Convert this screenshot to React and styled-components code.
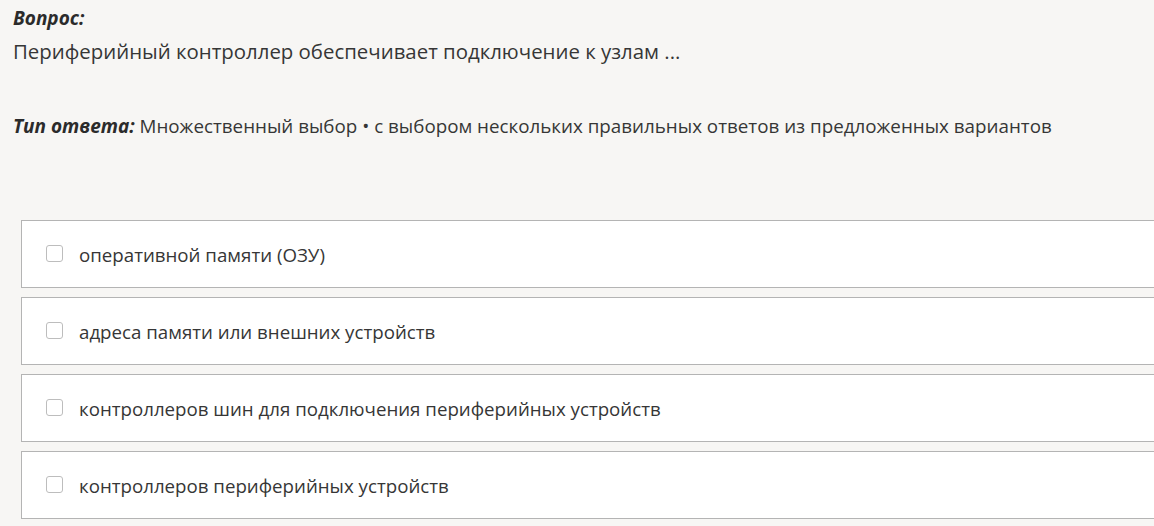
import React from 'react';
import styled, { createGlobalStyle } from 'styled-components';

const options = [
  'оперативной памяти (ОЗУ)',
  'адреса памяти или внешних устройств',
  'контроллеров шин для подключения периферийных устройств',
  'контроллеров периферийных устройств',
];

export default function App() {
  return (
    <>
      <GlobalSC />
      <PageSC>
        <LabelSC $size={19}>Вопрос:</LabelSC>
        <QuestionSC>
          Периферийный контроллер обеспечивает подключение к узлам ...
        </QuestionSC>
        <TypeSC>
          <LabelSC as="span" $size={19}>Тип ответа:</LabelSC> Множественный выбор • с
          выбором нескольких правильных ответов из предложенных вариантов
        </TypeSC>
        <OptionListSC>
          {options.map((text) => (
            <OptionSC key={text}>
              <CheckboxSC />
              <span>{text}</span>
            </OptionSC>
          ))}
        </OptionListSC>
      </PageSC>
    </>
  );
}

const GlobalSC = createGlobalStyle`
  html, body {
    margin: 0;
    padding: 0;
    background: #f7f6f4;
    overflow: hidden;
  }
`;

const PageSC = styled('div')`
  font-family: 'Open Sans', 'Noto Sans', sans-serif;
  color: #363636;
  padding: 5px 0 0 13px;
`;

const LabelSC = styled('div')`
  font-weight: 700;
  font-style: italic;
  font-size: ${(p) => p.$size || 16}px;
  color: #2b2b2b;
  line-height: 26px;
`;

const QuestionSC = styled('div')`
  font-size: 20.4px;
  line-height: 30px;
  margin-top: 5px;
`;

const TypeSC = styled('div')`
  font-size: 18.8px;
  line-height: 28px;
  margin-top: 46px;
`;

const OptionListSC = styled('div')`
  display: flex;
  flex-direction: column;
  gap: 9px;
  margin-top: 80px;
  margin-left: 8px;
  width: 1200px;
`;

const OptionSC = styled('label')`
  display: flex;
  align-items: center;
  gap: 16px;
  height: 68px;
  box-sizing: border-box;
  padding-left: 24px;
  background: #ffffff;
  border: 1.5px solid #b4b4b4;
  font-size: 18.7px;
  color: #363636;
`;

const CheckboxSC = styled('span')`
  box-sizing: border-box;
  width: 17px;
  height: 17px;
  border: 1.5px solid #bdbdbd;
  border-radius: 3px;
  background: #fff;
  flex-shrink: 0;
  margin-top: -2px;
`;
